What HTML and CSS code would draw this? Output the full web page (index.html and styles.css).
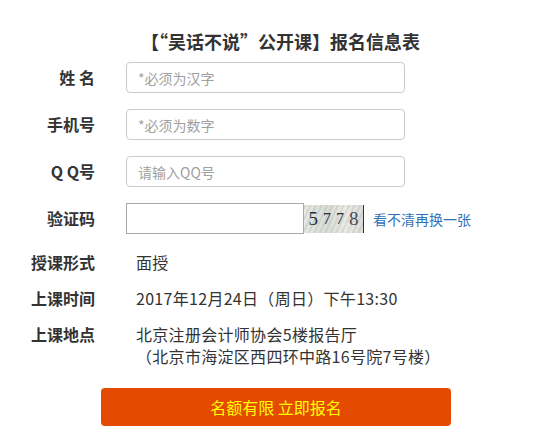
FILE: index.html
```html
<!DOCTYPE html>
<html lang="zh-CN">
<head>
<meta charset="utf-8">
<title>报名信息表</title>
<link rel="stylesheet" href="styles.css">
</head>
<body>
<div class="page">
  <h1 class="title">【“吴话不说”公开课】报名信息表</h1>
  <form class="form">
    <label class="label">姓&nbsp;名</label>
    <input class="field" type="text" placeholder="*必须为汉字">
    <label class="label">手机号</label>
    <input class="field" type="text" placeholder="*必须为数字">
    <label class="label">Q&nbsp;Q号</label>
    <input class="field" type="text" placeholder="请输入QQ号">
    <label class="label">验证码</label>
    <div class="captcha-row">
      <input class="captcha-input" type="text">
      <div class="captcha-img"><span class="d1">5</span><span class="d2">7</span><span class="d3">7</span><span class="d4">8</span></div>
      <a class="refresh" href="#">看不清再换一张</a>
    </div>
  </form>
  <div class="info">
    <div class="info-label">授课形式</div>
    <div class="info-value">面授</div>
    <div class="info-label">上课时间</div>
    <div class="info-value">2017年12月24日（周日）下午13:30</div>
    <div class="info-label">上课地点</div>
    <div class="info-value">北京注册会计师协会5楼报告厅<br>（北京市海淀区西四环中路16号院7号楼）</div>
  </div>
  <div class="actions">
    <button class="submit" type="button">名额有限 立即报名</button>
  </div>
</div>
</body>
</html>
```

FILE: styles.css
```css
* { box-sizing: border-box; }
html, body { margin: 0; padding: 0; background: #fff; }
body {
  font-family: "Noto Sans CJK SC", "Liberation Sans", sans-serif;
  color: #333;
}
.page {
  width: 549px;
  padding-top: 29px;
}
.title {
  margin: 0 0 9px 0;
  padding-left: 12px;
  font-size: 18px;
  line-height: 24px;
  font-weight: bold;
  text-align: center;
  color: #333;
}
.form {
  display: grid;
  grid-template-columns: 95px 279px;
  column-gap: 31px;
  row-gap: 16px;
  align-items: center;
}
.label {
  text-align: right;
  font-size: 16px;
  font-weight: bold;
  color: #333;
  line-height: 31px;
}
.field {
  height: 31px;
  width: 279px;
  border: 1px solid #ccc;
  border-radius: 4px;
  padding: 0 11px;
  font-family: inherit;
  font-size: 14px;
  color: #333;
  outline: none;
}
.field::placeholder { color: #a0a0a0; }
.captcha-row {
  display: flex;
  align-items: center;
  height: 31px;
  width: 420px;
}
.captcha-input {
  width: 178px;
  height: 31px;
  border: 1px solid #a9a9a9;
  border-radius: 0;
  padding: 0 4px;
  outline: none;
  flex: none;
}
.captcha-img {
  width: 60px;
  height: 28px;
  flex: none;
  display: flex;
  align-items: center;
  justify-content: center;
  gap: 5px;
  background:
    repeating-linear-gradient(115deg, rgba(160,170,160,0.25) 0 2px, rgba(255,255,255,0) 2px 5px),
    linear-gradient(90deg, #e5e8e3, #d8ddd6 40%, #eceae6 70%, #dcdcd8);
  border-right: 1px solid #333;
  font-family: "Liberation Serif", "DejaVu Serif", serif;
  font-size: 19px;
  color: #2a2f3a;
}
.captcha-img .d2, .captcha-img .d3 { font-size: 16px; }
.captcha-img .d4 { color: #444a55; }
.refresh {
  margin-left: 9px;
  font-size: 14px;
  color: #2f72b8;
  text-decoration: none;
  white-space: nowrap;
}
.info {
  display: grid;
  grid-template-columns: 95px 400px;
  column-gap: 41px;
  row-gap: 14px;
  margin-top: 17px;
  line-height: 22px;
}
.info-label {
  text-align: right;
  font-size: 16px;
  font-weight: bold;
  color: #333;
}
.info-value {
  font-size: 16px;
  letter-spacing: 0.3px;
  color: #333;
}
.actions {
  margin-top: 21px;
  padding-left: 101px;
}
.submit {
  width: 350px;
  height: 38px;
  border: none;
  border-radius: 4px;
  background: #e44a00;
  color: #ffff00;
  font-family: inherit;
  font-size: 16px;
  padding: 0;
  cursor: pointer;
}
```
